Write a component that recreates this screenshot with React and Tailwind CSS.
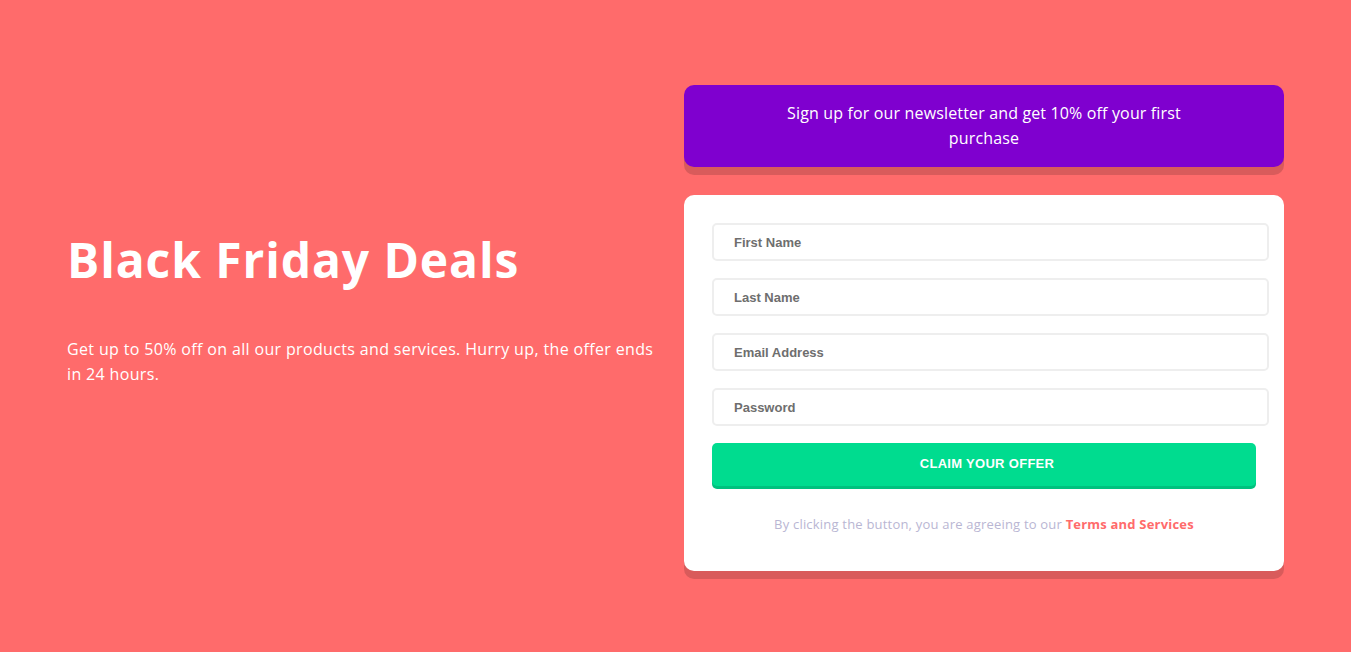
import React from 'react'

const fields = ['First Name', 'Last Name', 'Email Address', 'Password']

export default function App() {
  return (
    <div className="min-h-screen bg-[#ff6b6b] font-['Open_Sans',sans-serif]">
      <div className="grid grid-cols-[590px_600px] justify-between px-[67px] pt-[85px] pb-[73px]">
        <div className="pt-[139px] text-white">
          <h1 className="text-[48px] font-bold leading-[72px] tracking-[0.9px]">Black Friday Deals</h1>
          <p className="mt-[41px] text-[16px] leading-[25px] tracking-[0.35px]">
            Get up to 50% off on all our products and services. Hurry up, the offer ends in 24 hours.
          </p>
        </div>

        <div>
          <div className="rounded-[10px] bg-[#7f00cf] px-[16px] py-[16px] text-center shadow-[0_8px_0_rgba(0,0,0,0.15)]">
            <p className="mx-auto max-w-[430px] text-[16px] leading-[25px] tracking-[0.15px] text-white">
              Sign up for our newsletter and get 10% off your first purchase
            </p>
          </div>

          <form className="mt-[28px] rounded-[10px] bg-white px-[28px] pt-[28px] pb-[38px] shadow-[0_8px_0_rgba(0,0,0,0.15)]">
            <div className="flex flex-col gap-[17px]">
              {fields.map((f) => (
                <input
                  key={f}
                  type={f === 'Password' ? 'password' : 'text'}
                  placeholder={f}
                  className="h-[38px] w-[557px] rounded-[5px] border-2 border-[#eeeeee] px-[20px] font-['Liberation_Sans',Arial,sans-serif] text-[13px] font-bold text-[#6e6e6e] placeholder:text-[#6e6e6e] outline-none"
                />
              ))}
              <button
                type="button"
                className="h-[43px] w-full rounded-[5px] bg-[#00dc8f] pl-[6px] pb-[2px] font-['Liberation_Sans',Arial,sans-serif] text-[13px] font-bold tracking-[0.3px] text-white shadow-[0_3px_0_#00c17e]"
              >
                CLAIM YOUR OFFER
              </button>
            </div>
            <p className="mt-[29px] text-center text-[13px] leading-[18px] tracking-[0.2px] text-[#b9b6d3]">
              By clicking the button, you are agreeing to our{' '}
              <a href="#" className="font-bold text-[#ff6b6b]">Terms and Services</a>
            </p>
          </form>
        </div>
      </div>
    </div>
  )
}
